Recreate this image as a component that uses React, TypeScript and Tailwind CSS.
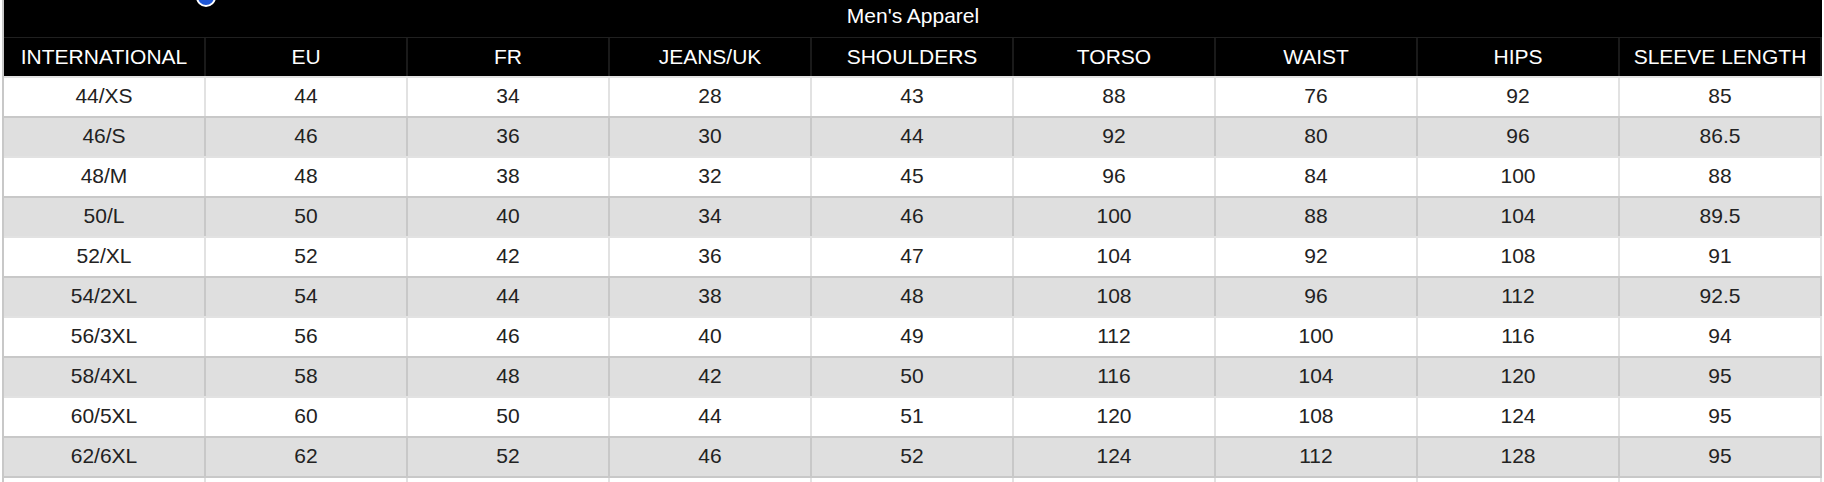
import React from "react";

const columns = [
  "INTERNATIONAL",
  "EU",
  "FR",
  "JEANS/UK",
  "SHOULDERS",
  "TORSO",
  "WAIST",
  "HIPS",
  "SLEEVE LENGTH",
];

const rows: string[][] = [
  ["44/XS", "44", "34", "28", "43", "88", "76", "92", "85"],
  ["46/S", "46", "36", "30", "44", "92", "80", "96", "86.5"],
  ["48/M", "48", "38", "32", "45", "96", "84", "100", "88"],
  ["50/L", "50", "40", "34", "46", "100", "88", "104", "89.5"],
  ["52/XL", "52", "42", "36", "47", "104", "92", "108", "91"],
  ["54/2XL", "54", "44", "38", "48", "108", "96", "112", "92.5"],
  ["56/3XL", "56", "46", "40", "49", "112", "100", "116", "94"],
  ["58/4XL", "58", "48", "42", "50", "116", "104", "120", "95"],
  ["60/5XL", "60", "50", "44", "51", "120", "108", "124", "95"],
  ["62/6XL", "62", "52", "46", "52", "124", "112", "128", "95"],
];

export default function App() {
  return (
    <div className="relative w-[1824px] h-[482px] overflow-hidden bg-white font-['Liberation_Sans',Arial,sans-serif] text-[21px]">
      <div className="ml-[2px] w-[1820px] border-l-[2px] border-[#c8c8c8]">
        {/* title row */}
        <div className="h-[38px] bg-black border-b border-[#202020] flex items-center justify-center pb-[5px] text-white">
          Men&apos;s Apparel
        </div>

        {/* header row */}
        <div className="grid grid-cols-[repeat(9,202px)] h-[38px] bg-black text-white">
          {columns.map((c) => (
            <div
              key={c}
              className="flex items-center justify-center border-r-[2px] border-[#1a1a1a] whitespace-nowrap"
            >
              {c}
            </div>
          ))}
        </div>

        {/* data rows */}
        {rows.map((row, i) => {
          const gray = i % 2 === 1;
          const last = i === rows.length - 1;
          return (
            <div
              key={row[0]}
              className={
                "grid grid-cols-[repeat(9,202px)] border-t-[2px] text-[#222222] " +
                (gray ? "bg-[#dfdfdf] border-[#c8c8c8] h-[40px]" : "bg-white border-[#e2e2e2] h-[40px]") +
                (last ? " !h-[42px] border-b-[2px] !border-b-[#c8c8c8]" : "")
              }
            >
              {row.map((v, j) => (
                <div
                  key={j}
                  className={
                    "flex items-center justify-center pb-[2px] border-r-[2px] " +
                    (gray ? "border-[#c8c8c8]" : "border-[#e2e2e2]")
                  }
                >
                  {v}
                </div>
              ))}
            </div>
          );
        })}

        {/* next row peeking at the bottom */}
        <div className="grid grid-cols-[repeat(9,202px)] h-[10px] bg-white">
          {columns.map((c) => (
            <div key={c} className="border-r-[2px] border-[#e2e2e2]" />
          ))}
        </div>
      </div>

      {/* selection handle */}
      <div className="absolute left-[196px] top-[-13px] w-[20px] h-[20px] rounded-full bg-[#1f57d6] border-[2px] border-white" />
    </div>
  );
}
